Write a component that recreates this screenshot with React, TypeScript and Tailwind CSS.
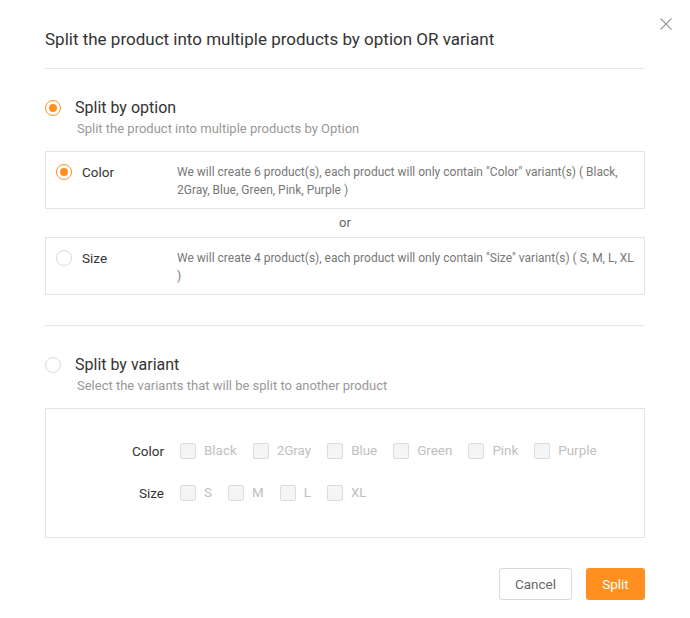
import React from "react";

const font = { fontFamily: 'Roboto, "Noto Sans", sans-serif' };

function Radio({ checked }: { checked?: boolean }) {
  return checked ? (
    <span className="flex h-4 w-4 shrink-0 items-center justify-center rounded-full border border-[#ff8f1f] bg-white">
      <span className="h-2 w-2 rounded-full bg-[#ff8f1f]" />
    </span>
  ) : (
    <span className="h-4 w-4 shrink-0 rounded-full border border-[#dcdcdc] bg-white" />
  );
}

function Check({ label }: { label: string }) {
  return (
    <label className="flex items-center gap-2 mr-4">
      <span className="h-4 w-4 rounded-[2px] border border-[#dcdcdc] bg-[#f5f5f5]" />
      <span className="text-[13.4px] text-[#c0c0c0]">{label}</span>
    </label>
  );
}

function OptionBox({ checked, name, text }: { checked?: boolean; name: string; text: string }) {
  return (
    <div className="flex items-start border border-[#e5e5e5] pt-[11px] pb-[9px] pl-[10px] pr-2">
      <div className="flex h-[18px] w-[121px] shrink-0 items-center gap-[10px]">
        <Radio checked={checked} />
        <span className="text-[13.5px] text-[#333]">{name}</span>
      </div>
      <p className="text-[12px] leading-[18px] text-[#777]">{text}</p>
    </div>
  );
}

export default function App() {
  return (
    <div className="relative h-[618px] w-[690px] bg-white" style={font}>
      <button className="absolute right-[18px] top-[18px] text-[#999]">
        <svg width="12" height="12" viewBox="0 0 12 12" fill="none" stroke="currentColor" strokeWidth="1.1">
          <path d="M0.5 0.5l11 11M11.5 0.5L0.5 11.5" />
        </svg>
      </button>
      <div className="px-[45px] pt-[29px]">
        <h2 className="text-[17px] leading-[20px] text-[#333]">
          Split the product into multiple products by option OR variant
        </h2>
        <div className="mt-[19px] h-px bg-[#e8e8e8]" />

        <div className="mt-[28px] flex items-center gap-[14px]">
          <Radio checked />
          <span className="text-[16px] leading-[22px] text-[#333]">Split by option</span>
        </div>
        <p className="ml-[32px] mt-[1px] text-[13px] leading-[18px] text-[#999]">
          Split the product into multiple products by Option
        </p>

        <div className="mt-[13px]">
          <OptionBox
            checked
            name="Color"
            text={'We will create 6 product(s), each product will only contain "Color" variant(s) ( Black, 2Gray, Blue, Green, Pink, Purple )'}
          />
          <div className="py-[5px] text-center text-[13px] leading-[18px] text-[#666]">or</div>
          <OptionBox
            name="Size"
            text={'We will create 4 product(s), each product will only contain "Size" variant(s) ( S, M, L, XL )'}
          />
        </div>

        <div className="mt-[30px] h-px bg-[#e8e8e8]" />

        <div className="mt-[28px] flex items-center gap-[14px]">
          <Radio />
          <span className="text-[16px] leading-[22px] text-[#333]">Split by variant</span>
        </div>
        <p className="ml-[32px] mt-[1px] text-[13px] leading-[18px] text-[#999]">
          Select the variants that will be split to another product
        </p>

        <div className="mt-[13px] flex h-[130px] flex-col justify-center gap-[22px] border border-[#e5e5e5] pl-[84px] pb-[2px]">
          <div className="flex items-center">
            <span className="w-[34px] mr-[16px] text-right text-[13.5px] text-[#333]">Color</span>
            {["Black", "2Gray", "Blue", "Green", "Pink", "Purple"].map((c) => (
              <Check key={c} label={c} />
            ))}
          </div>
          <div className="flex items-center">
            <span className="w-[34px] mr-[16px] text-right text-[13.5px] text-[#333]">Size</span>
            {["S", "M", "L", "XL"].map((c) => (
              <Check key={c} label={c} />
            ))}
          </div>
        </div>

        <div className="mt-[30px] flex justify-end gap-[14px]">
          <button className="h-[32px] w-[73px] rounded-[3px] border border-[#d9d9d9] bg-white text-[13.5px] text-[#666]">
            Cancel
          </button>
          <button className="h-[32px] w-[59px] rounded-[3px] bg-[#ff8f1f] text-[13.5px] text-white">
            Split
          </button>
        </div>
      </div>
    </div>
  );
}
